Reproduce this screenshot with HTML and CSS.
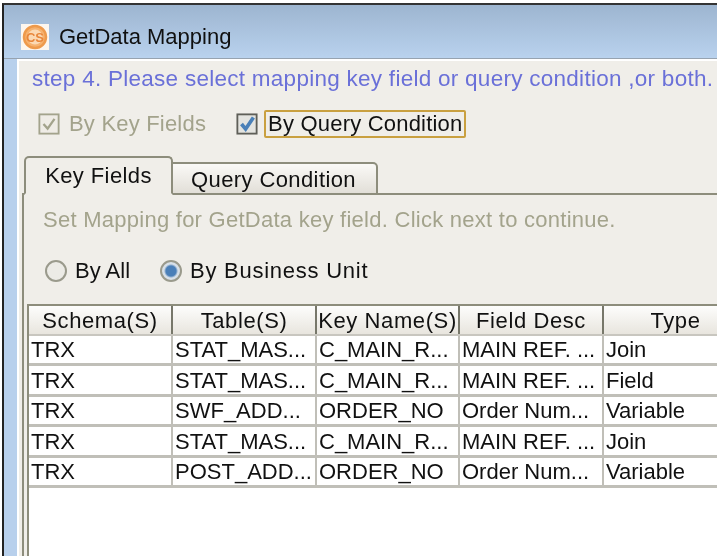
FILE: index.html
```html
<!DOCTYPE html>
<html lang="en">
<head>
    <meta charset="UTF-8">
    <title>GetData Mapping</title>
    <link rel="stylesheet" href="styles.css">
</head>
<body>
    <div class="window">
        <div class="titlebar">
            <svg class="app-icon" width="28" height="26" viewBox="0 0 28 26">
                <rect width="28" height="26" fill="#fdf6ee"/>
                <circle cx="14" cy="13" r="11" fill="#f6b26f" stroke="#ee9a4c" stroke-width="2.5"/>
                <circle cx="14" cy="13" r="7.5" fill="#fbd9b4"/>
                <text x="14" y="18" text-anchor="middle" class="app-icon-text">CS</text>
            </svg>
            <span class="title">GetData Mapping</span>
        </div>
        <div class="content">
            <div class="step">step 4. Please select mapping key field or query condition ,or both.</div>
            <div class="checks">
                <label class="check disabled">
                    <svg width="22" height="22" viewBox="0 0 24 24">
                        <rect x="1.5" y="1.5" width="21" height="21" fill="#efece6" stroke="#a3a38c" stroke-width="2"/>
                        <path d="M6 12l4.500 5L18 6.500" fill="none" stroke="#a3a38c" stroke-width="2.500"/>
                    </svg>
                    <span>By Key Fields</span>
                </label>
                <label class="check">
                    <svg width="22" height="22" viewBox="0 0 24 24">
                        <rect x="1.500" y="1.500" width="21" height="21" fill="#e4e4e0" stroke="#5f5f58" stroke-width="2"/>
                        <path d="M6 12l4.500 5.500L19 5" fill="none" stroke="#4a80b8" stroke-width="4"/>
                    </svg>
                    <span class="focused">By Query Condition</span>
                </label>
            </div>
            <div class="tabs">
                <div class="tab active">Key Fields</div>
                <div class="tab">Query Condition</div>
            </div>
            <div class="panel">
                <div class="hint">Set Mapping for GetData key field. Click next to continue.</div>
                <div class="radios">
                    <label class="radio"><i class="dot"></i>By All</label>
                    <label class="radio wide"><i class="dot on"></i>By Business Unit</label>
                </div>
                <div class="grid-wrap">
                    <table class="grid">
                        <colgroup>
                            <col class="c1"><col class="c2"><col class="c3"><col class="c4"><col class="c5">
                        </colgroup>
                        <thead>
                            <tr><th>Schema(S)</th><th>Table(S)</th><th>Key Name(S)</th><th>Field Desc</th><th>Type</th></tr>
                        </thead>
                        <tbody>
                            <tr><td>TRX</td><td>STAT_MAS...</td><td>C_MAIN_R...</td><td>MAIN REF. ...</td><td>Join</td></tr>
                            <tr><td>TRX</td><td>STAT_MAS...</td><td>C_MAIN_R...</td><td>MAIN REF. ...</td><td>Field</td></tr>
                            <tr><td>TRX</td><td>SWF_ADD...</td><td>ORDER_NO</td><td>Order Num...</td><td>Variable</td></tr>
                            <tr><td>TRX</td><td>STAT_MAS...</td><td>C_MAIN_R...</td><td>MAIN REF. ...</td><td>Join</td></tr>
                            <tr><td>TRX</td><td>POST_ADD...</td><td>ORDER_NO</td><td>Order Num...</td><td>Variable</td></tr>
                        </tbody>
                    </table>
                </div>
            </div>
        </div>
    </div>
</body>
</html>
```

FILE: styles.css
```css
body {
    margin: 0;
    background: #fff;
    font-family: "Liberation Sans", Arial, sans-serif;
    font-size: 22px;
    color: #111;
    overflow: hidden;
}
.window {
    width: 715px;
    height: 553px;
    margin-top: 3px;
    margin-left: 2px;
    border-top: 2px solid #333;
    border-left: 2px solid #222;
    background: #b8d0ec;
    display: flex;
    flex-direction: column;
    overflow: hidden;
    box-sizing: border-box;
    filter: blur(0.4px);
}
.titlebar {
    height: 54px;
    flex: none;
    background: linear-gradient(#9db5d0, #b9d2ee);
    display: flex;
    align-items: center;
    gap: 10px;
    padding: 11px 0 0 17px;
    box-sizing: border-box;
    border-bottom: 1px solid #97a3b0;
}
.app-icon-text {
    font-family: "Liberation Sans", sans-serif;
    font-weight: bold;
    font-size: 13px;
    fill: #e8863a;
}
.title {
    font-size: 22px;
    color: #101010;
}
.content {
    flex: 1;
    margin-left: 13px;
    background: #f0eee9;
    border-top: 2px solid #fff;
    border-left: 2px solid #fff;
    padding: 0 0 0 3px;
    min-height: 0;
    display: flex;
    flex-direction: column;
}
.step {
    color: #6a70d8;
    font-size: 22.500px;
    letter-spacing: 0.27px;
    line-height: 34px;
    margin-top: 1px;
    margin-left: 10px;
    white-space: nowrap;
}
.checks {
    display: flex;
    align-items: center;
    margin-top: 14px;
    margin-left: 16px;
    gap: 30px;
    height: 28px;
    letter-spacing: 0.2px;
}
.check {
    display: flex;
    align-items: center;
    gap: 9px;
}
.check + .check {
    gap: 6px;
}
.check.disabled {
    color: #a3a38c;
}
.focused {
    border: 2px solid #c9a040;
    border-radius: 2px;
    padding: 0 2px;
    line-height: 24px;
    color: #111;
}
.tabs {
    display: flex;
    align-items: flex-end;
    margin-top: 18px;
    height: 39px;
    padding-left: 2px;
    position: relative;
    z-index: 1;
    letter-spacing: 0.4px;
}
.tab {
    height: 33px;
    line-height: 31px;
    width: 205px;
    padding-right: 2px;
    box-sizing: border-box;
    text-align: center;
    background: linear-gradient(#faf9f6, #e2dfd8);
    border: 2px solid #8d8d7c;
    border-left: 0;
    border-radius: 0 5px 0 0;
}
.tab.active {
    width: 149px;
    height: 39px;
    padding-right: 0;
    line-height: 36px;
    background: #f0eee9;
    border-left: 2px solid #8d8d7c;
    border-bottom: 2px solid #f0eee9;
    border-radius: 5px 5px 0 0;
}
.panel {
    flex: 1;
    min-height: 0;
    margin-top: -2px;
    border-top: 2px solid #8d8d7c;
    border-left: 2px solid #8d8d7c;
    padding-left: 3px;
    display: flex;
    flex-direction: column;
}
.hint {
    color: #a3a38c;
    letter-spacing: 0.26px;
    line-height: 26px;
    margin-top: 12px;
    margin-left: 16px;
    white-space: nowrap;
}
.radios {
    display: flex;
    align-items: center;
    gap: 30px;
    margin-top: 24px;
    margin-left: 18px;
    height: 28px;
}
.radio {
    display: flex;
    align-items: center;
    gap: 8px;
}
.radio.wide {
    letter-spacing: 0.75px;
}
.dot {
    width: 18px;
    height: 18px;
    border-radius: 50%;
    border: 2px solid #9a9a8c;
    background: #ecebe6;
    display: block;
}
.dot.on {
    background: radial-gradient(circle, #4a7fb8 0 5px, #d8e0e8 7px);
}
.grid-wrap {
    flex: 1;
    min-height: 0;
    margin-top: 19px;
    background: #fff;
    border-top: 2px solid #8d8d7c;
    border-left: 2px solid #8d8d7c;
    overflow: hidden;
}
.grid {
    table-layout: fixed;
    border-collapse: collapse;
    width: 719px;
}
.c1 { width: 143px; }
.c2 { width: 144px; }
.c3 { width: 143px; }
.c4 { width: 144px; }
.c5 { width: 145px; }
.grid th {
    height: 26px;
    padding: 2px 0 0;
    font-weight: normal;
    letter-spacing: 0.6px;
    background: linear-gradient(#fdfdfc, #e8e5de);
    border-right: 2px solid #77776a;
    border-bottom: 2px solid #c8c6bf;
    white-space: nowrap;
}
.grid td {
    height: 26px;
    padding: 1px 0 0 2px;
    border-right: 2px solid #c0bfb8;
    border-bottom: 3px solid #c0bfb8;
    white-space: nowrap;
    overflow: hidden;
}
.grid tr:nth-child(even) td {
    height: 27px;
}
```
